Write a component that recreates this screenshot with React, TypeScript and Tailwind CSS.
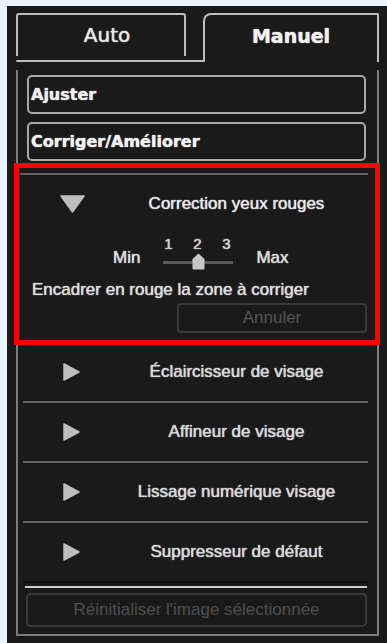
import React from "react";

const glow = "[text-shadow:0_0_1px_rgba(255,255,255,0.8),0_0_1px_rgba(255,255,255,0.5)]";

function TriDown() {
  return (
    <svg width="25" height="18" viewBox="0 0 25 18">
      <polygon points="1,1 24,1 12.5,17" fill="#bdbdbd" stroke="#bdbdbd" strokeWidth="1.5" strokeLinejoin="round" />
    </svg>
  );
}

function TriRight() {
  return (
    <svg width="17" height="18" viewBox="0 0 17 18">
      <polygon points="1,1 16,9 1,17" fill="#bdbdbd" stroke="#bdbdbd" strokeWidth="1.5" strokeLinejoin="round" />
    </svg>
  );
}

function Row({ label }: { label: string }) {
  return (
    <>
      <div className="h-[58px] flex items-center">
        <div className="w-[82px] pl-[40px] flex items-center">
          <TriRight />
        </div>
        <div className={`flex-1 text-center text-[17px] leading-[20px] text-[#d8d8d8] ${glow}`}>{label}</div>
      </div>
      <div className="h-[2px] bg-[#626262]" />
    </>
  );
}

export default function App() {
  return (
    <div
      className="w-[387px] h-[643px] bg-[#e9f4fd] pl-[7px] pt-[6px] overflow-hidden"
      style={{ fontFamily: '"Liberation Sans", Arial, sans-serif' }}
    >
      <div className="h-full bg-[#1a1a1a] pt-[7px] pb-[7px] flex flex-col">
        {/* Tabs */}
        <div className="flex ml-[9px] h-[49px]" style={{ fontFamily: '"DejaVu Sans", sans-serif' }}>
          <div className="w-[187px] h-full flex flex-col">
            <div className="w-[170px] h-[43px] border-2 border-b-0 border-[#bdbdbd] rounded-t-[3px] flex items-start justify-center pt-[8px] pl-[12px]">
              <span className={`text-[20px] leading-[24px] text-[#e6e6e6] ${glow}`}>Auto</span>
            </div>
            <div className="flex-1" />
            <div className="h-[2px] bg-[#bdbdbd] rounded-l-[1px]" />
          </div>
          <div className="w-[176px] h-full border-2 border-b-0 border-[#bdbdbd] rounded-tl-[8px] rounded-tr-[2px] flex items-start justify-center pt-[9px]">
            <span className={`text-[19px] leading-[24px] font-bold text-[#f0f0f0] ${glow}`}>Manuel</span>
          </div>
        </div>

        {/* Frame */}
        <div className="mt-[8px] ml-[9px] w-[363px] flex-1 border-l-2 border-r-2 border-b-2 border-[#7c7c7c] flex flex-col">
          <div
            className="mt-[5px] ml-[9px] w-[339px] h-[39px] border-2 border-[#a9a9a9] rounded-[5px] flex items-center pl-[2px]"
            style={{ fontFamily: '"DejaVu Sans", sans-serif' }}
          >
            <span className={`text-[16px] font-bold text-[#eeeeee] ${glow}`}>Ajuster</span>
          </div>
          <div
            className="mt-[8px] ml-[9px] w-[339px] h-[39px] border-2 border-[#a9a9a9] rounded-[5px] flex items-center pl-[2px]"
            style={{ fontFamily: '"DejaVu Sans", sans-serif' }}
          >
            <span className={`text-[16px] font-bold text-[#f2f2f2] ${glow}`}>Corriger/Améliorer</span>
          </div>

          <div className="ml-[5px] mr-[9px] flex flex-col">
            {/* Expanded section */}
            <div className="relative mt-[12px] flex flex-col">
              <div className="h-[2px] bg-[#626262] -ml-[3px]" />
              <div className="h-[58px] flex items-center">
                <div className="w-[82px] pl-[37px] flex items-center">
                  <TriDown />
                </div>
                <div className={`flex-1 text-center text-[17px] leading-[20px] text-[#e8e8e8] ${glow}`}>
                  Correction yeux rouges
                </div>
              </div>
              <div className="h-[39px] flex pl-[90px]">
                <span className={`mt-[16px] h-[18px] text-[17px] leading-[18px] text-[#dadada] ${glow}`}>Min</span>
                <div className="ml-[23px] w-[70px] flex flex-col pt-[3px]">
                  <div className={`h-[16px] flex gap-[19px] text-[15px] leading-[16px] text-[#cfcfcf] ${glow}`}>
                    <span className="w-[10px] text-center">1</span>
                    <span className="w-[10px] text-center">2</span>
                    <span className="w-[10px] text-center">3</span>
                  </div>
                  <div className="relative h-[18px]">
                    <div className="mt-[9px] h-[3px] bg-[#575757]" />
                    <svg className="absolute left-[29px] top-[1px]" width="13" height="17" viewBox="0 0 13 17">
                      <path d="M6.5 0.5 L12.5 6 L12.5 15.5 Q12.5 16.5 11.5 16.5 L1.5 16.5 Q0.5 16.5 0.5 15.5 L0.5 6 Z" fill="#c6c6c6" />
                    </svg>
                  </div>
                </div>
                <span className={`ml-[23px] mt-[16px] h-[18px] text-[17px] leading-[18px] text-[#dadada] ${glow}`}>Max</span>
              </div>
              <div className={`mt-[8px] h-[20px] pl-[9px] text-[17px] leading-[20px] text-[#dcdcdc] ${glow}`}>
                Encadrer en rouge la zone à corriger
              </div>
              <div className="mt-[3px] ml-auto mr-[1px] w-[190px] h-[30px] border-2 border-[#393939] rounded-[4px] flex items-center justify-center">
                <span className="text-[17px] text-[#545454]">Annuler</span>
              </div>
              <div className="h-[8px]" />
              <div className="h-[2px] bg-[#626262]" />
              <div className="absolute -left-[9px] -right-[12px] -top-[10px] -bottom-[2px] border-[5px] border-[#ff0000]" />
            </div>

            <Row label="Éclaircisseur de visage" />
            <Row label="Affineur de visage" />
            <Row label="Lissage numérique visage" />
            <div className="h-[58px] flex items-center">
              <div className="w-[82px] pl-[40px] flex items-center">
                <TriRight />
              </div>
              <div className={`flex-1 text-center text-[17px] leading-[20px] text-[#d8d8d8] ${glow}`}>Suppresseur de défaut</div>
            </div>
            <div className="h-[2px] bg-[#0d0d0d]" />
            <div className="mt-[3px] ml-[2px] mr-[1px] h-[2px] bg-[#cfcfcf]" />
          </div>

          <div className="mt-[5px] ml-[8px] w-[341px] h-[34px] border-2 border-[#3b3b3b] rounded-[5px] flex items-center justify-center">
            <span className="text-[17px] text-[#4f4f4f]">Réinitialiser l'image sélectionnée</span>
          </div>
          <div className="flex-1" />
        </div>
      </div>
    </div>
  );
}
